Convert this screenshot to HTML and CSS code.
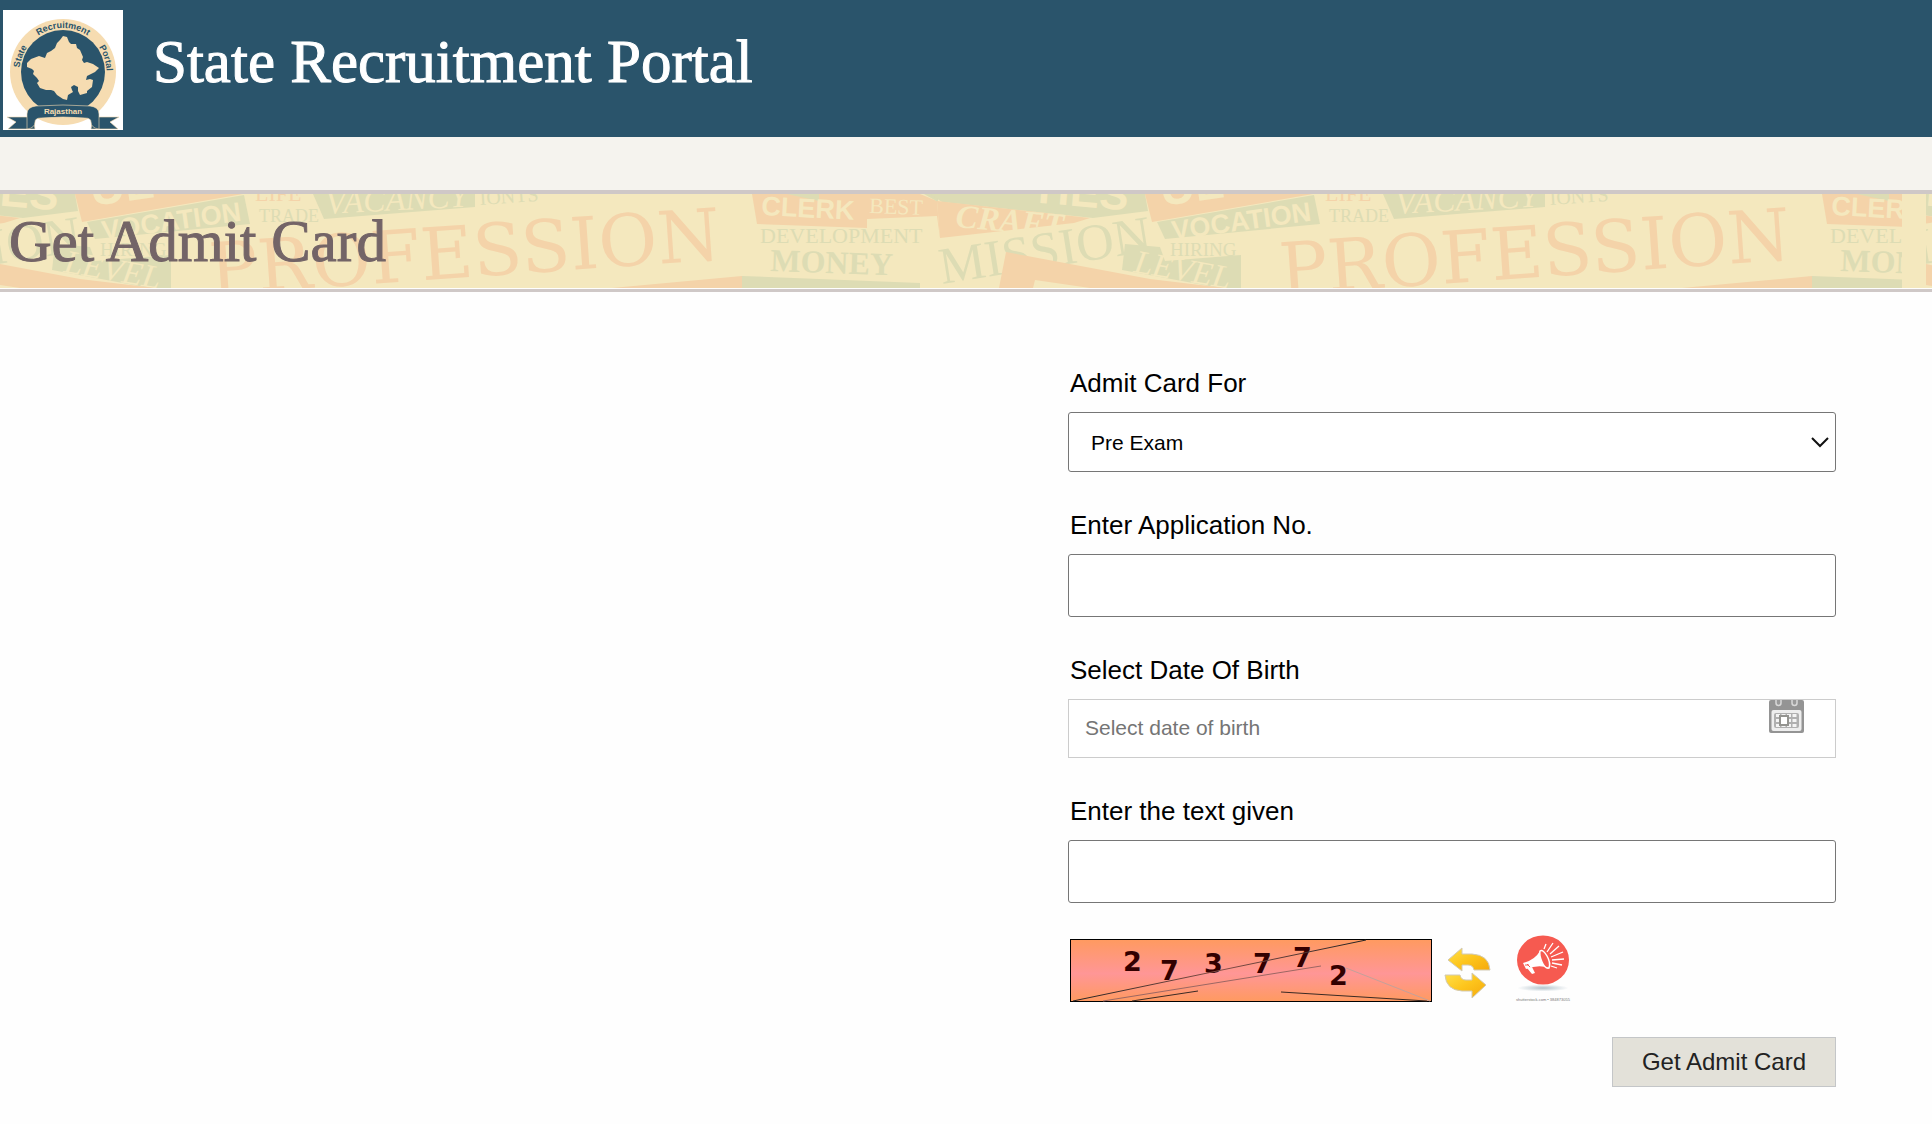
FILE: index.html
```html
<!DOCTYPE html>
<html lang="en">
<head>
<meta charset="utf-8">
<meta name="viewport" content="width=device-width, initial-scale=1">
<title>State Recruitment Portal</title>
<link rel="stylesheet" href="styles.css">
</head>
<body>
<header class="site-header">
  <svg class="logo" viewBox="0 0 120 120" role="img" aria-label="State Recruitment Portal, Rajasthan">
    <defs>
      <path id="ring" d="M16 62a44 44 0 0 1 88 0"/>
      <path id="ring-left" d="M25 88A44 44 0 0 1 60 18"/>
      <path id="ring-right" d="M60 18A44 44 0 0 1 95 88"/>
    </defs>
    <rect width="120" height="120" fill="#fff"/>
    <circle cx="60" cy="62" r="53" fill="#f6dcb1"/>
    <circle cx="60" cy="62" r="42" fill="#2a546b"/>
    <path fill="#f6dcb1" d="M60 26L64 27 66 32 68 34 73 34 74 38 77 40 80 47 79 50 81 53 84 52 90 54 96 58 92 62 84 66 83 70 87 69 90 70 89 77 84 81 84 83 77 85 75 81 75 77 71 75 68 77 69 80 70 82 65 85 64 90 60 89 54 85 51 81 48 80 43 80 37 78 34 73 36 71 34 68 30 64 31 61 29 59 24 57 24 53 28 49 36 46 42 48 44 43 48 41 52 38 54 33 57 30z"/>
    <g class="logo-ring-text">
      <text><textPath href="#ring" startOffset="50%" text-anchor="middle">Recruitment</textPath></text>
      <text><textPath href="#ring-left" startOffset="32">State</textPath></text>
      <text><textPath href="#ring-right" startOffset="42">Portal</textPath></text>
    </g>
    <g fill="#2a546b" stroke="#f6dcb1" stroke-width=".6">
      <path d="M4 107h26l2 12H5l8-7zM116 107H90l-2 12h27l-8-7z"/>
      <path d="M24 119V104q0-7 9-8 27-2 54 0 9 1 9 8v15q-8-1-8-7 0-4-6-4-22-2-44 0-6 0-6 4 0 6-8 7z"/>
    </g>
    <text class="logo-ribbon-text" x="60" y="104" text-anchor="middle">Rajasthan</text>
  </svg>
  <h1 class="site-title">State Recruitment Portal</h1>
</header>

<div class="nav-strip"></div>

<section class="banner">
  <svg class="banner-art" aria-hidden="true">
    <defs>
      <g id="words">
        <path class="green" d="M930 0l12 8 151 16 55-7-3-17z"/>
        <path class="orange" d="M937 7l153 17-16 5-134 15z"/>
        <text class="cream caps-italic heavy" transform="translate(955 33) rotate(5)">CRAFT</text>
        <text class="cream heavy" transform="translate(1030 8) rotate(5)" font-size="44">TIES</text>
        <text class="green serif" transform="translate(942 90) rotate(-9)" font-size="52">MISSION</text>
        <path class="green" d="M1125 50l35 3 5 14 76-6v33h-21l-98-18z"/>
        <text class="cream caps-italic" transform="translate(1133 78) rotate(10)" font-size="30">LEVEL</text>
        <path class="orange" d="M1006 58l144 27 75 9H999z"/>
        <path class="cream" d="M1035 86l55 8h-57z"/>
        <text class="green serif" x="1170" y="62" font-size="19">HIRING</text>
        <path class="orange" d="M1145 0l7 28L1313 0z"/>
        <text class="cream heavy" transform="translate(1162 12) rotate(-8)" font-size="48">UL</text>
        <path class="green" d="M1157 28l157-27 6 29-155 15z"/>
        <text class="cream heavy" transform="translate(1173 46) rotate(-8)" font-size="27">VOCATION</text>
        <text class="orange serif" x="1325" y="7" font-size="22">LIFE</text>
        <text class="green serif" x="1329" y="28" font-size="18">TRADE</text>
        <path class="green" d="M1383 0l11 25 151-12V0z"/>
        <text class="cream caps-italic" transform="translate(1396 20) rotate(-3)" font-size="27">VACANCY</text>
        <text class="green serif" transform="translate(1550 11) rotate(-4)" font-size="20">IONTS</text>
        <text class="orange profession" transform="translate(1281 101) rotate(-4)">PROFESSION</text>
        <g transform="translate(1070)">
          <path class="orange" d="M752 0h168l17 7 3 37-3-22-70 3v9l-110-4z"/>
          <path class="green" d="M787 0h32v7zM924 0h14v8zM742 82l178 7v5H742z"/>
          <path class="orange" d="M612 94l130-12v12z"/>
          <text class="cream heavy" transform="translate(761 21) rotate(3)" font-size="27">CLERK</text>
          <text class="cream serif" transform="translate(869 19) rotate(2)" font-size="22">BEST</text>
          <text class="green serif" x="760" y="49" font-size="22">DEVELOPMENT</text>
          <text class="green money" transform="translate(770 77) rotate(2)">MONEY</text>
        </g>
      </g>
    </defs>
    <svg width="1902" height="94"><use href="#words" x="-1070"/><use href="#words"/></svg>
    <svg x="1926" width="1902" height="94"><use href="#words" x="-1070"/><use href="#words"/></svg>
  </svg>
  <h2 class="banner-title">Get Admit Card</h2>
</section>

<main class="content">
  <form class="admit-form">
    <div class="field">
      <label for="exam">Admit Card For</label>
      <select id="exam" class="control select"><option>Pre Exam</option></select>
    </div>
    <div class="field">
      <label for="application">Enter Application No.</label>
      <input id="application" class="control" type="text">
    </div>
    <div class="field">
      <label for="dob">Select Date Of Birth</label>
      <div class="date-box">
        <input id="dob" class="date-input" type="text" placeholder="Select date of birth">
        <button class="icon-button date-button" type="button" aria-label="Open calendar">
          <svg width="35" height="33" viewBox="0 0 35 33">
            <path fill="#949494" d="M0 2q0-2 2-2h31q2 0 2 2v29q0 2-2 2H2q-2 0-2-2z"/>
            <rect x="2.500" y="10" width="30" height="21" rx="2" fill="#eee"/>
            <rect x="5" y="13" width="25" height="15" rx="2" fill="#b0b0b0"/>
            <path stroke="#f4f4f4" stroke-width="3" stroke-dasharray="4 1.500" d="M7 15.500h22M7 20.500h22M7 25.500h22"/>
            <rect x="11" y="16" width="8" height="9" fill="#fff" stroke="#949490" stroke-width="2"/>
            <path fill="#999" stroke="#d8d8d8" stroke-width="1.500" d="M7 0v3q0 2.500 2.500 2.500T12 3V0M23 0v3q0 2.500 2.500 2.500T28 3V0"/>
          </svg>
        </button>
      </div>
    </div>
    <div class="field">
      <label for="captcha">Enter the text given</label>
      <input id="captcha" class="control" type="text">
    </div>
    <div class="captcha-row">
      <svg class="captcha" width="362" height="63" viewBox="0 0 362 63" role="img" aria-label="Captcha">
        <defs>
          <linearGradient id="glow" x2="0" y2="1">
            <stop offset="0" stop-color="#ff9a60"/><stop offset=".55" stop-color="#ff9696"/><stop offset="1" stop-color="#ff9a60"/>
          </linearGradient>
          <linearGradient id="long-line"><stop offset="0" stop-color="#222"/><stop offset=".5" stop-color="#854f46"/><stop offset="1" stop-color="#222"/></linearGradient>
        </defs>
        <rect x=".5" y=".5" width="361" height="62" fill="url(#glow)" stroke="#000"/>
        <g class="captcha-digits">
          <text x="53" y="32">2</text><text x="90" y="41">7</text><text x="134" y="34">3</text>
          <text x="183" y="34">7</text><text x="223" y="28">7</text><text x="259" y="46">2</text>
        </g>
        <g fill="none">
          <path stroke="url(#long-line)" d="M3 62L296 1"/>
          <path stroke="#9c6763" d="M33 62L251 27"/>
          <path stroke="#3a2a24" d="M62 62l66-10M211 53l146 9"/>
          <path stroke="#c4a19a" d="M276 29l84 33"/>
        </g>
      </svg>
      <button class="icon-button refresh-button" type="button" aria-label="Refresh captcha">
        <svg width="48" height="52" viewBox="0 0 48 52">
          <defs><linearGradient id="gold" x2="1" y2="1"><stop offset="0" stop-color="#ffe04a"/><stop offset=".5" stop-color="#fdc51c"/><stop offset="1" stop-color="#f5a80c"/></linearGradient></defs>
          <g fill="url(#gold)" stroke="#d2cab4" stroke-width="1">
            <path d="M4 13L18 1v6h10q17 1 18 16H30q-1-5-6-5h-6v6z"/>
            <path d="M1 28h15q1 5 6 5h6v-7l14 12-14 13v-7H18Q2 43 1 28z"/>
          </g>
        </svg>
      </button>
      <button class="icon-button audio-button" type="button" aria-label="Play captcha audio">
        <svg width="56" height="70" viewBox="0 0 56 70">
          <defs><radialGradient id="shade"><stop offset="0" stop-color="#b4c3cc"/><stop offset="1" stop-color="#fff"/></radialGradient></defs>
          <ellipse cx="28" cy="53" rx="26" ry="3.500" fill="url(#shade)"/>
          <ellipse cx="28" cy="25" rx="26" ry="24.500" fill="#f65a50"/>
          <path fill="#fff" d="M8 28q12-3 17-12l9 17q-10-4-23 1z"/>
          <path fill="#fff" d="M12 33l5-1 3 6-3 1z"/>
          <path fill="#f65a50" stroke="#fff" stroke-width="1.500" d="M25 16q3-2 7 5t2 12q-4 1-7-6t-2-11z"/>
          <path stroke="#fff" fill="none" stroke-width="1.300" d="M29 14l2-5M32 17l6-9M35 19l9-8M36 22l12-5M37 25l12-1M37 28l10 2M36 31l6 2"/>
          <path stroke="#f65a50" fill="none" d="M12 29l3 3M10 30h4"/>
          <text class="credit" x="1" y="66">shutterstock.com • 384873055</text>
        </svg>
      </button>
    </div>
    <div class="actions"><button class="submit" type="submit">Get Admit Card</button></div>
  </form>
</main>
</body>
</html>
```
FILE: styles.css
```css
* { box-sizing: border-box; }

body {
  margin: 0;
  background: #fefefe;
  color: #000;
  font-family: "Liberation Sans", Arial, sans-serif;
}

.site-header {
  display: flex;
  align-items: flex-start;
  gap: 30px;
  padding: 10px 3px 7px;
  background: #2a546b;
}

.logo { width: 120px; height: 120px; flex: none; }
.logo-ring-text { font-size: 9px; font-weight: bold; fill: #2a546b; }
.logo-ribbon-text { font-size: 8px; font-weight: bold; fill: #f6dcb1; }

.site-title,
.banner-title {
  margin: 0;
  font-family: "Liberation Serif", Georgia, serif;
  font-weight: normal;
  line-height: 64px;
}

.site-title {
  padding-top: 20px;
  color: #fff;
  font-size: 61px;
  -webkit-text-stroke: 1px #fff;
}

.nav-strip { height: 53px; background: #f5f3ee; }

.banner {
  display: grid;
  height: 102px;
  border-top: 4px solid #cfc8c7;
  border-bottom: 3px solid #cfc8c7;
  padding-bottom: 1px;
}

.banner-art,
.banner-title { grid-area: 1 / 1; }

.banner-art { width: 100%; height: 94px; background: #f4e8be; }

.banner-title {
  position: relative;
  padding: 15px 9px 0;
  color: #736467;
  font-size: 59px;
  -webkit-text-stroke: 1px #736467;
}

.orange { fill: #f4d3a9; }
.green { fill: #dddcb4; }
.cream { fill: #f4e8be; }
.serif { font-family: "Liberation Serif", serif; }
.heavy { font-weight: bold; }
.caps-italic { font-family: "Liberation Serif", serif; font-style: italic; font-size: 33px; }
.profession { font-family: "DejaVu Serif", serif; font-size: 72px; }
.money { font-family: "Liberation Serif", serif; font-size: 32px; font-weight: bold; }

.content {
  display: flex;
  justify-content: flex-end;
  padding: 76px 96px 36px;
}

.admit-form {
  display: flex;
  flex-direction: column;
  gap: 38px;
  width: 100%;
  max-width: 768px;
}

.field { display: flex; flex-direction: column; gap: 14px; }
.field label { padding-left: 2px; font-size: 26px; line-height: 30px; }

.control {
  width: 100%;
  height: 63px;
  padding: 0 22px;
  border: 1px solid #767676;
  border-radius: 3px;
  background: #fff;
  color: #000;
  font: 21px "Liberation Sans", Arial, sans-serif;
}

.select {
  height: 60px;
  appearance: none;
  background: #fff url("data:image/svg+xml,%3Csvg xmlns='http://www.w3.org/2000/svg' width='18' height='11'%3E%3Cpath d='M1 1l8 8 8-8' fill='none' stroke='%23111' stroke-width='2'/%3E%3C/svg%3E") no-repeat right 6px center;
}

.date-box { display: flex; align-items: flex-start; height: 59px; border: 1px solid #ccc; background: #fff; }

.date-input {
  flex: 1;
  min-width: 0;
  height: 55px;
  padding: 0 16px;
  border: 0;
  background: none;
  font: 21px "Liberation Sans", Arial, sans-serif;
}
.date-input::placeholder { color: #757575; }

.icon-button { display: block; padding: 0; border: 0; background: none; cursor: pointer; }
.icon-button svg { display: block; }
.date-button { margin-right: 31px; }

.captcha-row { display: flex; align-items: center; padding-left: 2px; margin: -6px 0; }
.captcha { flex: none; margin-right: 12px; }
.refresh-button { margin-top: 6px; }
.audio-button { margin-left: 23px; }
.captcha-digits { font: bold 27px "DejaVu Sans", sans-serif; fill: #300; }
.credit { font-size: 4px; fill: #777; }

.actions { display: flex; justify-content: flex-end; }

.submit {
  padding: 0 29px;
  border: 1px solid #c4c6c8;
  background: #e3e1d9;
  color: #222;
  font: 24px/48px "Liberation Sans", Arial, sans-serif;
}
```
